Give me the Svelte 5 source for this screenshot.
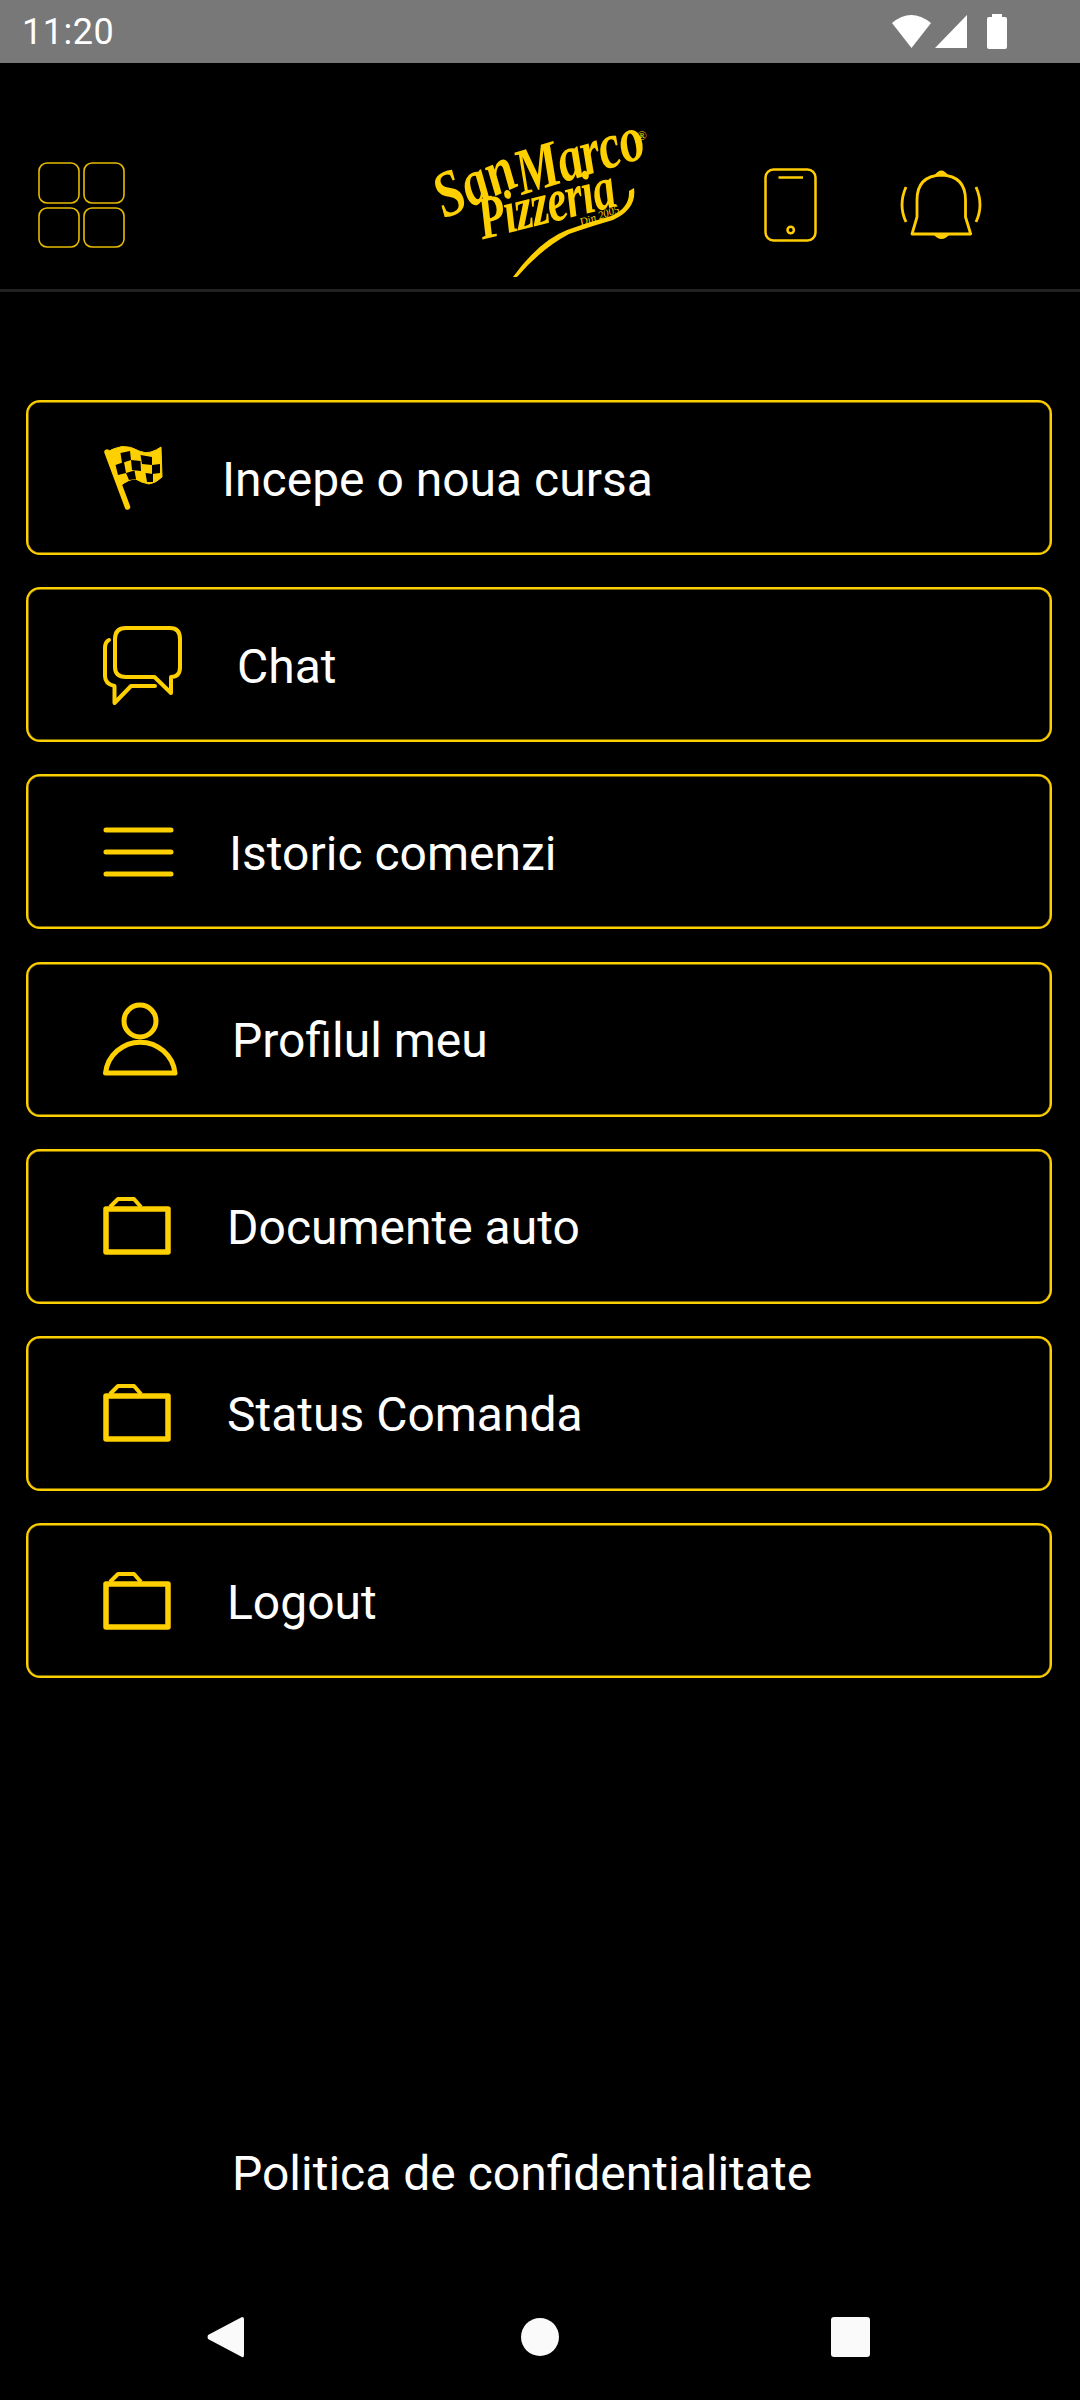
<script>
	const items = [
		{ label: 'Incepe o noua cursa', icon: 'flag', left: 223 },
		{ label: 'Chat', icon: 'chat', left: 238 },
		{ label: 'Istoric comenzi', icon: 'list', left: 230 },
		{ label: 'Profilul meu', icon: 'user', left: 233 },
		{ label: 'Documente auto', icon: 'folder', left: 228 },
		{ label: 'Status Comanda', icon: 'folder', left: 228 },
		{ label: 'Logout', icon: 'folder', left: 228 }
	];
</script>

{#snippet menuIcon(name)}
	<svg class="menu-icon" viewBox="0 0 100 100" width="100" height="100" fill="none" stroke="#ffd000" stroke-width="4">
		{#if name === 'flag'}
			<g transform="translate(0 18)">
				<path d="M5 6 L25.5 61" stroke-width="5.5" stroke-linecap="round" />
				<path d="M5 6 Q12 2 20 0.5 Q29 0 37 5 Q44 8 49 6 Q55 4 59 1 L60 31 Q54 37 47 38 Q40 37 33.5 33 Q27 33 18 40 Z" fill="#ffd000" stroke="#ffd000" stroke-width="1" />
				<path d="M18.5 7 L28 5 L29 14 L20 17 Z M38.5 9 L50 11 L50 19 L40 18 Z M13.5 19 L22 16 L24 27 L16 29 Z M29 14 L38.5 15 L39 25 L30 24 Z M50 19 L58 18 L58 27 L50 28 Z M24 27 L32.5 24.5 L34 33 L27 34 Z M43.5 27 L51 28 L51 36 L45 36 Z" fill="#000" stroke="none" />
			</g>
		{:else if name === 'chat'}
			<path d="M24 13 H68 Q78 13 78 24 V52 Q78 62 69 62 V78 L52.5 62 H24 Q13 62 13 52 V24 Q13 13 24 13 Z" stroke-linejoin="round" />
			<path d="M7 25 Q3 27 3 33 V61 Q3 69 12.5 71 V88 L29 71 H53" stroke-linecap="round" stroke-linejoin="round" />
		{:else if name === 'list'}
			<path d="M4 28 H69 M4 50 H69 M4 72 H69" stroke-width="5" stroke-linecap="round" />
		{:else if name === 'user'}
			<circle cx="38" cy="32" r="16" stroke-width="5" />
			<path d="M3.5 84 A35 35 0 0 1 73 84 Z" stroke-width="5" stroke-linejoin="round" />
		{:else}
			<path d="M4 33 H66 V76 H4 Z" stroke-width="5.5" stroke-linejoin="round" />
			<path d="M8 31 L16 23 H32 L39 31" stroke-linejoin="round" />
		{/if}
	</svg>
{/snippet}

<div class="page">
	<div class="status-bar">
		<span class="time">11:20</span>
		<svg class="status-icons" viewBox="0 0 120 36" width="120" height="36" fill="#fff">
			<path d="M0 9 Q19 -7 39 9 L19.5 34 Z" />
			<path d="M43 34 L75 1 V34 Z" />
			<path d="M95 5 Q95 3 97 3 H100 V0 H110 V3 H113 Q115 3 115 5 V33 Q115 35 113 35 H97 Q95 35 95 33 Z" />
		</svg>
	</div>

	<header>
		<svg class="apps" viewBox="0 0 87 86" width="87" height="86" fill="none" stroke="#e6bb00" stroke-width="1.6">
			<rect x="1" y="1" width="40" height="40" rx="8" />
			<rect x="46" y="1" width="40" height="40" rx="8" />
			<rect x="1" y="46" width="40" height="39" rx="8" />
			<rect x="46" y="46" width="40" height="39" rx="8" />
		</svg>

		<div class="logo">
			<span class="logo-san">San</span>
			<span class="logo-marco">Marco</span>
			<span class="logo-pizzeria">Pizzeria</span>
			<span class="logo-din">Din 2005</span>
			<span class="logo-reg">®</span>
			<svg class="logo-swash" viewBox="0 0 212 148" width="212" height="148" fill="#ffd000">
				<path d="M74 146 Q100 110 128 99 Q150 91 172 85 Q191 77 190 60 L195 57 Q198 78 174 89 Q150 96 130 103 Q102 118 78 146 Z" />
			</svg>
		</div>

		<svg class="phone" viewBox="0 0 53 74" width="53" height="74" fill="none" stroke="#ffcd00" stroke-width="2.5">
			<rect x="1.5" y="1.5" width="50" height="71" rx="8" />
			<path d="M14.5 9.5 H39" />
			<circle cx="26.7" cy="62" r="3.2" />
		</svg>

		<svg class="bell" viewBox="0 0 82 72" width="82" height="72" fill="none" stroke="#ffcd00" stroke-width="2.8">
			<path d="M6 18 Q-2 36 6 53 M76 18 Q84 36 76 53" />
			<path d="M12 65 L17 48 V31 Q17 7 41.4 6 Q65.5 7 65.5 31 V48 L70.7 65 Z" stroke-linejoin="round" />
			<path d="M34 7 Q41.4 -4 48.5 7 Z M33 65 Q41.4 75 50 65 Z" fill="#ffcd00" stroke="none" />
		</svg>
	</header>

	<nav class="menu">
		{#each items as item}
			<button class="menu-item">
				{@render menuIcon(item.icon)}
				<span class="label" style="left: {item.left}px">{item.label}</span>
			</button>
		{/each}
	</nav>

	<p class="privacy">Politica de confidentialitate</p>

	<div class="nav-bar">
		<svg viewBox="0 0 38 42" width="38" height="42" fill="#fafafa">
			<path d="M35 1 Q37 1 37 3 V39 Q37 42 35 41 L1 23 Q0 21 1 19 L35 1 Z" />
		</svg>
		<span class="nav-circle"></span>
		<span class="nav-square"></span>
	</div>
</div>

<style>
	:global(body) {
		margin: 0;
		background: #000;
	}

	.page {
		height: 2400px;
		display: flex;
		flex-direction: column;
		background: #000;
		font-family: Roboto, sans-serif;
		color: #fff;
		overflow: hidden;
	}

	.status-bar {
		height: 63px;
		flex: none;
		box-sizing: border-box;
		background: #787878;
		display: flex;
		align-items: center;
		justify-content: space-between;
		padding: 1px 68px 0 22px;
	}

	.time {
		font-size: 36px;
		color: #fff;
		letter-spacing: 0.5px;
	}

	header {
		height: 229px;
		flex: none;
		box-sizing: border-box;
		border-bottom: 3px solid #222;
		display: flex;
		align-items: center;
		padding: 58px 0 0 38px;
	}

	.logo {
		position: relative;
		width: 212px;
		height: 148px;
		margin-left: 314px;
		color: #ffd000;
		font-family: 'Liberation Serif', serif;
		font-style: italic;
		font-weight: 700;
	}

	.logo span {
		position: absolute;
		line-height: 1;
		white-space: nowrap;
		transform-origin: left bottom;
	}

	.logo-san {
		left: 10px;
		top: 46px;
		font-size: 52px;
		transform: rotate(-24deg) scaleY(1.25);
	}

	.logo-marco {
		left: 86px;
		top: 24px;
		font-size: 50px;
		letter-spacing: -1px;
		transform: rotate(-17deg) scaleY(1.3);
	}

	.logo-pizzeria {
		left: 46px;
		top: 74px;
		font-size: 45px;
		letter-spacing: -1px;
		transform: rotate(-14deg) scaleY(1.35);
	}

	.logo-din {
		left: 143px;
		top: 86px;
		font-size: 11px;
		font-weight: 400;
		transform: rotate(-20deg);
	}

	.logo-reg {
		left: 198px;
		top: -2px;
		font-size: 13px;
		font-weight: 400;
		font-style: normal;
	}

	.logo-swash {
		position: absolute;
		left: 0;
		top: 0;
	}

	.phone {
		margin-left: 113px;
	}

	.bell {
		margin-left: 83px;
	}

	.menu {
		display: flex;
		flex-direction: column;
		gap: 32.2px;
		padding: 108px 0 0 26px;
	}

	.menu-item {
		position: relative;
		width: 1026px;
		height: 155px;
		padding: 0;
		background: #000;
		border: 2px solid #ffd000;
		box-shadow: inset 0 0 0 0.5px #ffd000;
		border-radius: 14px;
		font: inherit;
		color: inherit;
		text-align: left;
	}

	.menu-icon {
		position: absolute;
		left: 73.5px;
		top: 25.5px;
	}

	.label {
		position: absolute;
		top: 50%;
		transform: translate(-29px, calc(-50% + 2px));
		font-size: 48px;
		line-height: 56px;
		white-space: nowrap;
	}

	.privacy {
		margin: auto 0 0;
		padding: 0 0 0 232px;
		font-size: 48px;
		line-height: 56px;
		height: 56px;
	}

	.nav-bar {
		height: 198px;
		flex: none;
		display: flex;
		align-items: flex-start;
		padding: 114px 0 0 207px;
		box-sizing: border-box;
	}

	.nav-circle {
		width: 38px;
		height: 38px;
		margin: 2px 0 0 276px;
		border-radius: 50%;
		background: #fafafa;
	}

	.nav-square {
		width: 39px;
		height: 40px;
		margin: 1px 0 0 272px;
		border-radius: 3px;
		background: #fafafa;
	}
</style>
